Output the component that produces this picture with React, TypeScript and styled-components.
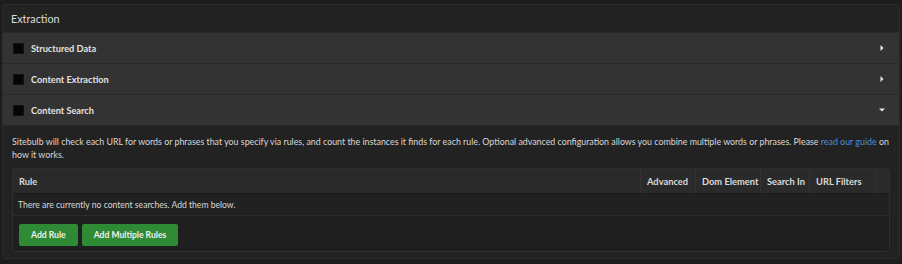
import React from 'react'
import styled, { createGlobalStyle } from 'styled-components'

const GlobalStyle = createGlobalStyle`
  html, body {
    margin: 0;
    padding: 0;
    background: #1d1d1d;
    font-family: Lato, 'Open Sans', sans-serif;
  }
`

const Page = styled.div`
  width: 902px;
  height: 264px;
  padding: 4px 2px 0;
  box-sizing: border-box;
  overflow: hidden;
`

const Panel = styled.section`
  border: 1px solid #2c2c2c;
  border-radius: 3px;
  background: #222222;
`

const PanelHeader = styled.div`
  height: 27px;
  display: flex;
  align-items: center;
  padding: 0 8px;
  background: #232323;
  color: #dcdcdc;
  font-size: 10.8px;
`

const SectionRow = styled.div`
  height: 30px;
  display: flex;
  align-items: center;
  padding: 0 10px;
  background: #333333;
  border-top: 1px solid #2a2a2a;
  color: #e2e2e2;
  font-size: 9.2px;
  font-weight: 700;
`

const Check = styled.span`
  width: 9px;
  height: 9px;
  background: #050505;
  border: 1px solid #111;
  margin-right: 7px;
  flex: none;
`

const Label = styled.span`
  flex: 1;
`

const Caret = styled.svg`
  width: 6px;
  height: 6px;
  margin-right: 4px;
  fill: #e8e8e8;
`

const Body = styled.div`
  padding: 9px 9px 6px;
  background: #222222;
  border-top: 1px solid #2a2a2a;
`

const Intro = styled.p`
  margin: 0 0 7px;
  color: #d8d8d8;
  font-size: 8.85px;
  line-height: 13px;

  a {
    color: #4e8fd0;
    text-decoration: none;
  }
`

const Table = styled.div`
  border: 1px solid #2e2e2e;
  border-radius: 3px;
  background: #1f1f1f;
  overflow: hidden;
`

const Head = styled.div`
  display: grid;
  grid-template-columns: 1fr 55px 65px 49px 67px 13px;
  height: 24px;
  background: #2a2a2a;
  border-bottom: 1px solid #1a1a1a;
`

const HeadCell = styled.div<{ $first?: boolean }>`
  display: flex;
  align-items: center;
  padding: 0 6px;
  color: #dadada;
  font-size: 9.3px;
  font-weight: 700;
  border-left: ${p => (p.$first ? 'none' : '1px solid #333')};
  white-space: nowrap;
  overflow: hidden;
`

const EmptyRow = styled.div`
  height: 21px;
  display: flex;
  align-items: center;
  padding: 0 5px;
  color: #d8d8d8;
  font-size: 8.6px;
  background: #212121;
  border-bottom: 1px solid #2c2c2c;
`

const Actions = styled.div`
  display: flex;
  gap: 4px;
  padding: 8px 6px 5px;
`

const Button = styled.button`
  height: 22px;
  padding: 0 12px;
  border: none;
  border-radius: 2px;
  background: #2f8a35;
  color: #f0f0f0;
  font-family: inherit;
  font-size: 8.6px;
  font-weight: 700;
  cursor: pointer;
`

const sections = [
  { name: 'Structured Data', open: false },
  { name: 'Content Extraction', open: false },
  { name: 'Content Search', open: true },
]

const columns = ['Rule', 'Advanced', 'Dom Element', 'Search In', 'URL Filters', '']

export default function App() {
  return (
    <Page>
      <GlobalStyle />
      <Panel>
        <PanelHeader>Extraction</PanelHeader>
        {sections.map(s => (
          <SectionRow key={s.name}>
            <Check />
            <Label>{s.name}</Label>
            <Caret viewBox="0 0 6 6">
              {s.open ? <polygon points="0,1.5 6,1.5 3,4.5" /> : <polygon points="1.5,0 4.5,3 1.5,6" />}
            </Caret>
          </SectionRow>
        ))}
        <Body>
          <Intro>
            Sitebulb will check each URL for words or phrases that you specify via rules, and count the instances it finds
            for each rule. Optional advanced configuration allows you combine multiple words or phrases. Please{' '}
            <a href="#">read our guide</a> on how it works.
          </Intro>
          <Table>
            <Head>
              {columns.map((c, i) => (
                <HeadCell key={i} $first={i === 0}>
                  {c}
                </HeadCell>
              ))}
            </Head>
            <EmptyRow>There are currently no content searches. Add them below.</EmptyRow>
            <Actions>
              <Button>Add Rule</Button>
              <Button>Add Multiple Rules</Button>
            </Actions>
          </Table>
        </Body>
      </Panel>
    </Page>
  )
}
